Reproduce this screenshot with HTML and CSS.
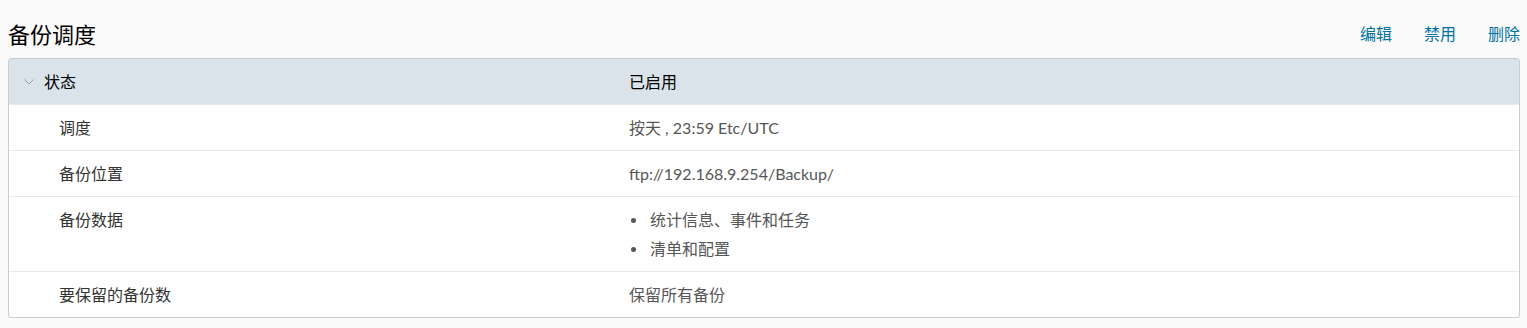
FILE: index.html
```html
<!DOCTYPE html>
<html lang="zh-CN">
<head>
<meta charset="utf-8">
<title>备份调度</title>
<link rel="stylesheet" href="styles.css">
</head>
<body>
<div class="page">
  <div class="head">
    <h2 class="title">备份调度</h2>
    <div class="actions">
      <a class="link">编辑</a>
      <a class="link">禁用</a>
      <a class="link">删除</a>
    </div>
  </div>
  <div class="card">
    <div class="row row-head">
      <div class="cell label-head">
        <svg class="chev" width="10" height="6" viewBox="0 0 10 6"><path d="M0.5 0.5 L5 5 L9.5 0.5" fill="none" stroke="#9a9a9a" stroke-width="1"/></svg>
        <span>状态</span>
      </div>
      <div class="cell value-head">已启用</div>
    </div>
    <div class="row">
      <div class="cell label">调度</div>
      <div class="cell value">按天 , 23:59 Etc/UTC</div>
    </div>
    <div class="row">
      <div class="cell label">备份位置</div>
      <div class="cell value">ftp://192.168.9.254/Backup/</div>
    </div>
    <div class="row">
      <div class="cell label">备份数据</div>
      <div class="cell value">
        <ul class="list">
          <li>统计信息、事件和任务</li>
          <li>清单和配置</li>
        </ul>
      </div>
    </div>
    <div class="row">
      <div class="cell label">要保留的备份数</div>
      <div class="cell value">保留所有备份</div>
    </div>
  </div>
</div>
</body>
</html>
```

FILE: styles.css
```css
html, body {
  margin: 0;
  padding: 0;
  background: #fafafa;
}
body {
  font-family: Lato, "Noto Sans CJK SC", sans-serif;
  font-size: 16px;
  color: #333;
}
.page {
  padding: 0 7px 0 8px;
}
.head {
  display: flex;
  align-items: flex-end;
  justify-content: space-between;
  height: 58px;
}
.title {
  margin: 0 0 9px 0;
  font-size: 22px;
  font-weight: 400;
  line-height: 28px;
  color: #000;
}
.actions {
  display: flex;
  gap: 32px;
  margin-bottom: 12px;
}
.link {
  color: #0072a3;
  font-size: 16px;
  line-height: 24px;
  cursor: pointer;
}
.card {
  background: #fff;
  border: 1px solid #cccccc;
  border-radius: 3px;
  overflow: hidden;
}
.row {
  display: grid;
  grid-template-columns: 620px 1fr;
  border-top: 1px solid #e8e8e8;
}
.row-head {
  border-top: none;
  background: #d9e3e9;
  height: 45px;
  align-items: center;
}
.row-head .cell {
  padding: 0;
  color: #000;
}
.cell {
  padding: 10px 0;
  line-height: 25px;
}
.label-head {
  display: flex;
  align-items: center;
  padding-left: 15px !important;
}
.chev {
  margin-right: 10px;
}
.label {
  padding-left: 50px;
  color: #333;
}
.value {
  color: #565656;
}
.list {
  margin: 0;
  padding: 0 0 0 21px;
  list-style: none;
}
.list li {
  position: relative;
  line-height: 25px;
}
.list li + li {
  margin-top: 4px;
}
.list li::before {
  content: "";
  position: absolute;
  left: -19px;
  top: 11px;
  width: 5px;
  height: 5px;
  border-radius: 50%;
  background: #565656;
}
```
